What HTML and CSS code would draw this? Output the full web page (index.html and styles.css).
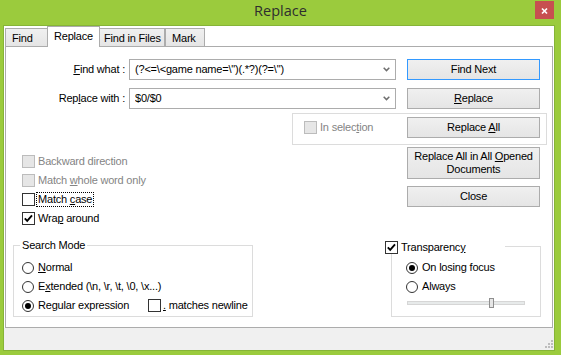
FILE: index.html
```html
<!DOCTYPE html>
<html>
<head>
<meta charset="utf-8">
<link rel="stylesheet" href="styles.css">
</head>
<body>
<div class="window">
  <div class="titlebar">
    <span class="title">Replace</span>
    <div class="close"><svg width="19" height="18" viewBox="0 0 19 18"><path d="M7 7.5 L12 12.5 M12 7.5 L7 12.5" stroke="#fff" stroke-width="1.7" fill="none"/></svg></div>
  </div>
  <div class="client">
    <div class="tabs">
      <div class="tabrow">
        <div class="tab t-find">Find</div>
        <div class="tab active t-replace">Replace</div>
        <div class="tab t-files">Find in Files</div>
        <div class="tab t-mark">Mark</div>
      </div>
      <div class="panel">
        <div class="rows">
          <div class="lbl"><u>F</u>ind what :</div>
          <div class="combo"><span class="ctext">(?&lt;=\&lt;game name=\")(.*?)(?=\")</span><svg class="chev" width="7" height="5" viewBox="0 0 7 5"><path d="M0.7 0.8 L3.5 3.6 L6.3 0.8" stroke="#6e6e6e" stroke-width="1.5" fill="none"/></svg></div>
          <div class="btn default">Find Next</div>
          <div class="lbl">Rep<u>l</u>ace with :</div>
          <div class="combo"><span class="ctext">$0/$0</span><svg class="chev" width="7" height="5" viewBox="0 0 7 5"><path d="M0.7 0.8 L3.5 3.6 L6.3 0.8" stroke="#6e6e6e" stroke-width="1.5" fill="none"/></svg></div>
          <div class="btn"><span><u>R</u>eplace</span></div>
        </div>
        <div class="sel-group">
          <div class="chk disabled"><span class="box"></span><span>In selec<u>t</u>ion</span></div>
          <div class="btn"><span>Replace <u>A</u>ll</span></div>
        </div>
        <div class="mid">
          <div class="opts">
            <div class="chk disabled"><span class="box"></span><span>Backward direction</span></div>
            <div class="chk disabled"><span class="box"></span><span>Match <u>w</u>hole word only</span></div>
            <div class="chk"><span class="box"></span><span class="focus">Match <u>c</u>ase</span></div>
            <div class="chk"><span class="box"><svg width="11" height="11" viewBox="0 0 11 11"><path d="M1.8 5.4 L4.2 7.9 L9 2.4" stroke="#000" stroke-width="1.9" fill="none"/></svg></span><span>Wra<u>p</u> around</span></div>
          </div>
          <div class="btncol">
            <div class="btn tall"><span>Replace All in All <u>O</u>pened<br>Documents</span></div>
            <div class="btn">Close</div>
          </div>
        </div>
        <div class="bottom">
          <div class="group search">
            <div class="legend">Search Mode</div>
            <div class="radios">
              <div class="rrow"><span class="radio"></span><span><u>N</u>ormal</span></div>
              <div class="rrow"><span class="radio"></span><span>E<u>x</u>tended (\n, \r, \t, \0, \x...)</span></div>
              <div class="rrow"><div class="rx-main"><span class="radio on"></span><span>Re<u>g</u>ular expression</span></div><div class="chk inline"><span class="box"></span><span><u>.</u> matches newline</span></div></div>
            </div>
          </div>
          <div class="group trans">
            <div class="legend chklegend"><span class="box"><svg width="11" height="11" viewBox="0 0 11 11"><path d="M1.8 5.4 L4.2 7.9 L9 2.4" stroke="#000" stroke-width="1.9" fill="none"/></svg></span><span>Transparenc<u>y</u></span></div>
            <div class="radios tr">
              <div class="rrow"><span class="radio on"></span><span>On losing focus</span></div>
              <div class="rrow"><span class="radio"></span><span>Always</span></div>
            </div>
            <div class="slider"><div class="track"><span class="thumb"></span></div></div>
          </div>
        </div>
      </div>
    </div>
    <div class="statusbar">
      <svg width="8" height="8" viewBox="0 0 8 8"><g fill="#bdbdbd"><rect x="6" y="0" width="2" height="2"/><rect x="3" y="3" width="2" height="2"/><rect x="6" y="3" width="2" height="2"/><rect x="0" y="6" width="2" height="2"/><rect x="3" y="6" width="2" height="2"/><rect x="6" y="6" width="2" height="2"/></g></svg>
    </div>
  </div>
</div>
</body>
</html>
```
FILE: styles.css
```css
* { box-sizing: border-box; }
html, body { margin: 0; padding: 0; }
body {
  width: 561px;
  height: 355px;
  overflow: hidden;
  background: #9bcb3d;
  font-family: "Liberation Sans", Arial, sans-serif;
  font-size: 11px;
  line-height: 13px;
  letter-spacing: -0.2px;
  color: #000;
}
u { text-decoration: underline; text-underline-offset: 1px; }
.window { display: flex; flex-direction: column; height: 355px; }
.titlebar {
  height: 25px;
  flex: none;
  display: grid;
  grid-template-columns: 1fr auto 1fr;
  align-items: start;
}
.title {
  grid-column: 2;
  font-family: "Open Sans", "Noto Sans", sans-serif;
  font-size: 14.5px;
  line-height: 20px;
  margin-top: 1px;
  color: #2e2e2e;
  letter-spacing: 0;
}
.close {
  grid-column: 3;
  justify-self: end;
  width: 19px;
  height: 18px;
  margin: 1px 7px 0 0;
  background: #c75050;
}
.close svg { display: block; }
.client {
  flex: none;
  height: 326px;
  margin: 0 6px 0 3px;
  border: 1px solid #86b437;
  background: #fff;
  display: flex;
  flex-direction: column;
}
.tabs { margin: 0 1px; height: 302px; display: flex; flex-direction: column; flex: none; }
.tabrow { height: 20px; display: flex; align-items: flex-end; flex: none; }
.tab {
  height: 18px;
  border: 1px solid #acacac;
  border-bottom: none;
  background: linear-gradient(#f0f0f0, #e5e5e5);
  padding: 3px 0 0 6px;
  white-space: nowrap;
}
.tab.active {
  height: 21px;
  margin-bottom: -1px;
  position: relative;
  z-index: 1;
  background: #fff;
  padding-top: 3px;
}
.t-find { width: 42px; border-right: none; }
.t-replace { width: 53px; }
.t-files { width: 65px; padding-left: 4px; border-left: none; }
.t-mark { width: 40px; border-left: 1px solid #acacac; }
.panel {
  height: 282px;
  flex: none;
  border: 1px solid #acacac;
  display: flex;
  flex-direction: column;
}
.rows {
  margin-top: 12px;
  display: grid;
  grid-template-columns: 119px 267px 140px;
  grid-template-rows: 21px 21px;
  column-gap: 4px;
  row-gap: 8px;
}
.lbl { text-align: right; align-self: center; white-space: nowrap; }
.combo {
  height: 21px;
  border: 1px solid #acacac;
  background: #fff;
  display: flex;
  align-items: center;
  padding: 0 5px 0 5px;
  white-space: nowrap;
}
.ctext { flex: 1; overflow: hidden; }
.chev { display: block; flex: none; }
.btn {
  width: 133px;
  height: 21px;
  border: 1px solid #acacac;
  background: linear-gradient(#f0f0f0, #e5e5e5);
  display: flex;
  align-items: center;
  justify-content: center;
  text-align: center;
  white-space: nowrap;
}
.rows .btn { margin-left: 7px; }
.btn.default { border-color: #3399ff; }
.btn.tall { height: 32px; }
.sel-group {
  margin: 4px 0 0 286px;
  width: 255px;
  height: 32px;
  flex: none;
  border: 1px solid #dcdcdc;
  display: flex;
  align-items: center;
  padding: 0 6px 3px 11px;
}
.sel-group .btn { margin-left: auto; }
.chk { display: flex; align-items: center; height: 19px; gap: 3px; white-space: nowrap; }
.box {
  width: 13px;
  height: 13px;
  flex: none;
  border: 1px solid #333;
  background: #fff;
  display: flex;
  align-items: center;
  justify-content: center;
}
.box svg { display: block; }
.chk.disabled { color: #848484; }
.chk.disabled .box { background: #e6e6e6; border-color: #bcbcbc; }
.sel-group .chk { height: 13px; }
.focus { outline: 1px dotted #000; outline-offset: 0; padding: 0 1px; margin-left: -1px; }
.mid { display: flex; margin-top: 2px; flex: none; }
.opts { padding: 5px 0 0 16px; display: flex; flex-direction: column; }
.btncol { margin-left: auto; margin-right: 12px; display: flex; flex-direction: column; gap: 7px; }
.bottom { display: flex; align-items: flex-start; margin-top: 17px; }
.group { border: 1px solid #dcdcdc; flex: none; }
.search { margin-left: 7px; width: 240px; height: 72px; }
.trans { margin: 1px 0 0 138px; width: 150px; height: 71px; }
.legend {
  display: block;
  width: max-content;
  height: 13px;
  margin: -7px 0 0 6px;
  padding: 0 2px;
  background: #fff;
  white-space: nowrap;
}
.chklegend {
  display: flex;
  align-items: center;
  gap: 3px;
  width: 120px;
  margin: -6px 0 0 -7px;
  padding: 0;
}
.radios { margin-top: 6px; padding-left: 8px; }
.radios.tr { margin-top: 4px; padding-left: 14px; }
.rrow { display: flex; align-items: center; height: 19px; gap: 4px; white-space: nowrap; }
.radio {
  width: 12px;
  height: 12px;
  flex: none;
  border: 1px solid #333;
  border-radius: 50%;
  background: #fff;
  display: flex;
  align-items: center;
  justify-content: center;
}
.radio.on::after {
  content: "";
  width: 6px;
  height: 6px;
  border-radius: 50%;
  background: #000;
}
.rx-main { display: flex; align-items: center; gap: 4px; width: 122px; }
.chk.inline { gap: 2px; }
.slider { margin-top: 2px; padding-left: 15px; height: 9px; display: flex; align-items: center; }
.track {
  position: relative;
  width: 118px;
  height: 4px;
  border: 1px solid #d6d6d6;
  background: #e7eaea;
}
.thumb {
  position: absolute;
  left: 81px;
  top: -4px;
  width: 5px;
  height: 10px;
  border: 1px solid #8f8f8f;
  background: #e6e6e6;
}
.statusbar {
  flex: 1;
  background: #f0f0f0;
  display: flex;
  justify-content: flex-end;
  align-items: flex-end;
  padding: 0 1px 2px 0;
}
.statusbar svg { display: block; }
```
